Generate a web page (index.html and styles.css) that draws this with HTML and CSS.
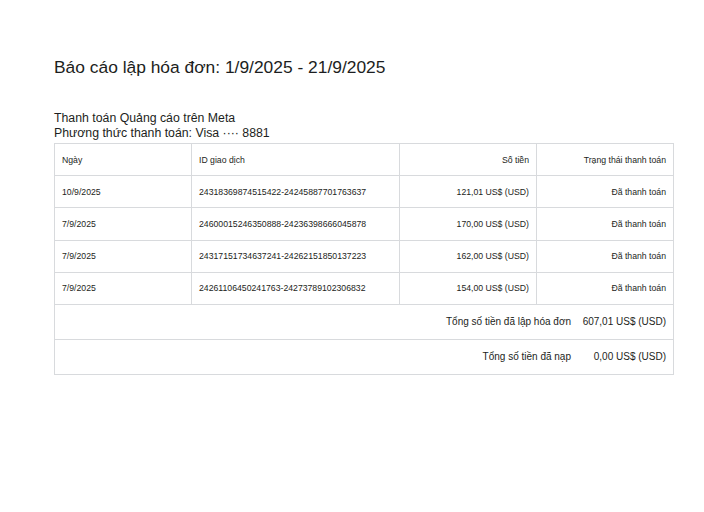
FILE: index.html
```html
<!DOCTYPE html>
<html lang="vi">
<head>
  <meta charset="UTF-8" />
  <title>Báo cáo lập hóa đơn</title>
  <link rel="stylesheet" href="styles.css">
</head>
<body>
  <div class="page">
    <h1 class="title">Báo cáo lập hóa đơn: 1/9/2025 - 21/9/2025</h1>

    <div class="meta">
      <div>Thanh toán Quảng cáo trên Meta</div>
      <div>Phương thức thanh toán: Visa ···· 8881</div>
    </div>

    <table class="bill">
      <thead>
        <tr>
          <th class="c-date">Ngày</th>
          <th class="c-id">ID giao dịch</th>
          <th class="c-amount">Số tiền</th>
          <th class="c-status">Trạng thái thanh toán</th>
        </tr>
      </thead>
      <tbody>
        <tr>
          <td>10/9/2025</td>
          <td>24318369874515422-24245887701763637</td>
          <td class="num">121,01 US$ (USD)</td>
          <td class="num">Đã thanh toán</td>
        </tr>
        <tr>
          <td>7/9/2025</td>
          <td>24600015246350888-24236398666045878</td>
          <td class="num">170,00 US$ (USD)</td>
          <td class="num">Đã thanh toán</td>
        </tr>
        <tr>
          <td>7/9/2025</td>
          <td>24317151734637241-24262151850137223</td>
          <td class="num">162,00 US$ (USD)</td>
          <td class="num">Đã thanh toán</td>
        </tr>
        <tr>
          <td>7/9/2025</td>
          <td>24261106450241763-24273789102306832</td>
          <td class="num">154,00 US$ (USD)</td>
          <td class="num">Đã thanh toán</td>
        </tr>
        <tr class="total">
          <td colspan="4">
            <div class="total-line">
              <span class="total-label">Tổng số tiền đã lập hóa đơn</span>
              <span class="total-value">607,01 US$ (USD)</span>
            </div>
          </td>
        </tr>
        <tr class="total">
          <td colspan="4">
            <div class="total-line">
              <span class="total-label">Tổng số tiền đã nạp</span>
              <span class="total-value">0,00 US$ (USD)</span>
            </div>
          </td>
        </tr>
      </tbody>
    </table>
  </div>
</body>
</html>
```

FILE: styles.css
```css
body {
  margin: 0;
  background: #ffffff;
  color: #1c1e21;
  font-family: "Liberation Sans", Arial, sans-serif;
}

.page {
  padding: 55px 30px 0 54px;
}

.title {
  margin: 0 0 32px;
  font-size: 17.4px;
  font-weight: normal;
  line-height: 24px;
}

.meta {
  font-size: 12.3px;
  line-height: 15px;
  margin-bottom: 2px;
}

.bill {
  width: 620px;
  border-collapse: collapse;
  font-size: 8.7px;
}

.bill th,
.bill td {
  border: 1px solid #d8dadd;
  padding: 0 7px;
  height: 31.2px;
  text-align: left;
  font-weight: normal;
}

.bill .c-date { width: 122px; }
.bill .c-id { width: 193px; }
.bill .c-amount { width: 122px; text-align: right; }
.bill .c-status { text-align: right; }

.bill td.num {
  text-align: right;
}

.bill .total td {
  height: 34px;
  font-size: 10px;
}

.total-line {
  display: flex;
  justify-content: flex-end;
  gap: 3px;
  white-space: nowrap;
}

.total-value {
  width: 92px;
  text-align: right;
}
```
